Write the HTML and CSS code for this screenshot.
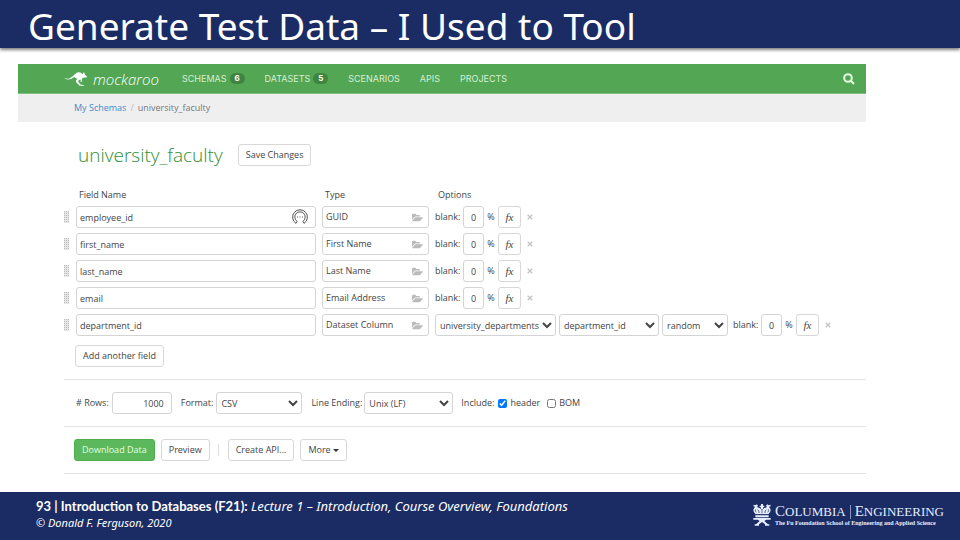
FILE: index.html
```html
<!DOCTYPE html>
<html lang="en">
<head>
<meta charset="utf-8">
<meta name="viewport" content="width=device-width, initial-scale=1">
<title>Generate Test Data – I Used to Tool</title>
<link rel="stylesheet" href="styles.css">
</head>
<body>
<svg class="defs" aria-hidden="true">
  <symbol id="folder" viewBox="0 0 18 14"><path d="M0 11V2.500Q0 1 1.500 1H5Q6.500 1 6.500 2.500V3H11.500Q13 3 13 4.500V5.500H6Q4.500 5.500 3.500 6.700Z"/><path d="M6 6.700H17Q18.300 6.700 17.500 7.700L14 12Q13.200 13 12 13H1Q0 13 .7 12L4.200 7.700Q5 6.700 6 6.700Z"/></symbol>
  <symbol id="grip" viewBox="0 0 6 12"><path d="M0 0H5V12H0Z" fill="#e6e6e6"/><path d="M.5 0V12M2.500 0V12M4.500 0V12" fill="none" stroke="currentColor" stroke-dasharray="1 1"/></symbol>
  <symbol id="cross" viewBox="0 0 6 6"><path d="M.7 .7L5.300 5.300M5.300 .7L.7 5.300" fill="none" stroke="currentColor" stroke-width="1.300"/></symbol>
</svg>

<header class="slide-header"><h1 class="slide-title">Generate Test Data – I Used to Tool</h1></header>

<main class="slide-main">
  <div class="app">
    <nav class="navbar">
      <a class="brand" href="#">
        <svg class="kangaroo" viewBox="0 0 66 42" aria-hidden="true"><path d="M0 18Q8 24 17 20Q25 16 31 9Q38 1 47 4L54 9L55 2L58 7L60 4L60 10L66 15L65 18L58 18Q54 19 51 22L52 29L48 32L47 28L49 26L46 24L40 28L47 38L57 40L57 42L45 42L35 32L34 27L39 22Q33 21 30 17Q22 23 13 24Q4 25 0 18Z"/></svg>
        <span class="brand-name">mockaroo</span>
      </a>
      <ul class="nav-links">
        <li><a href="#">SCHEMAS <span class="badge">6</span></a></li>
        <li><a href="#">DATASETS <span class="badge">5</span></a></li>
        <li><a href="#">SCENARIOS</a></li>
        <li><a href="#">APIS</a></li>
        <li><a href="#">PROJECTS</a></li>
      </ul>
      <button class="search" type="button" aria-label="Search"><svg viewBox="0 0 12 12"><circle cx="5" cy="5" r="3.800"/><path d="M7.800 7.800L11 11"/></svg></button>
    </nav>
    <nav class="breadcrumb"><a href="#">My Schemas</a><span class="slash">/</span><span>university_faculty</span></nav>

    <form class="schema">
      <div class="heading">
        <h2>university_faculty</h2>
        <button class="btn" type="button">Save Changes</button>
      </div>

      <div class="fields">
        <div class="row labels"><span></span><span>Field Name</span><span>Type</span><span>Options</span></div>
        <div class="row">
          <svg class="grip"><use href="#grip"/></svg>
          <div class="name-cell">
            <input class="control" type="text" value="employee_id" aria-label="Field name 1">
            <svg class="helper" viewBox="0 0 16 16" aria-hidden="true"><path d="M4 14.400A7.400 7.400 0 1 1 12 14.400M5 12.300A5.200 5.200 0 1 1 11 12.300M4 14.400L5 12.300M12 14.400L11 12.300"/><path d="M5 8H6M7.500 8H8.500M10 8H11"/></svg>
          </div>
          <button class="control type" type="button">GUID<svg><use href="#folder"/></svg></button>
          <div class="options"><label for="b1">blank:</label><input class="control blank" id="b1" type="text" value="0"><span class="percent">%</span><button class="btn fx" type="button">fx</button><button class="remove" type="button" aria-label="Remove"><svg><use href="#cross"/></svg></button></div>
        </div>
        <div class="row">
          <svg class="grip"><use href="#grip"/></svg>
          <div class="name-cell"><input class="control" type="text" value="first_name" aria-label="Field name 2"></div>
          <button class="control type" type="button">First Name<svg><use href="#folder"/></svg></button>
          <div class="options"><label for="b2">blank:</label><input class="control blank" id="b2" type="text" value="0"><span class="percent">%</span><button class="btn fx" type="button">fx</button><button class="remove" type="button" aria-label="Remove"><svg><use href="#cross"/></svg></button></div>
        </div>
        <div class="row">
          <svg class="grip"><use href="#grip"/></svg>
          <div class="name-cell"><input class="control" type="text" value="last_name" aria-label="Field name 3"></div>
          <button class="control type" type="button">Last Name<svg><use href="#folder"/></svg></button>
          <div class="options"><label for="b3">blank:</label><input class="control blank" id="b3" type="text" value="0"><span class="percent">%</span><button class="btn fx" type="button">fx</button><button class="remove" type="button" aria-label="Remove"><svg><use href="#cross"/></svg></button></div>
        </div>
        <div class="row">
          <svg class="grip"><use href="#grip"/></svg>
          <div class="name-cell"><input class="control" type="text" value="email" aria-label="Field name 4"></div>
          <button class="control type" type="button">Email Address<svg><use href="#folder"/></svg></button>
          <div class="options"><label for="b4">blank:</label><input class="control blank" id="b4" type="text" value="0"><span class="percent">%</span><button class="btn fx" type="button">fx</button><button class="remove" type="button" aria-label="Remove"><svg><use href="#cross"/></svg></button></div>
        </div>
        <div class="row">
          <svg class="grip"><use href="#grip"/></svg>
          <div class="name-cell"><input class="control" type="text" value="department_id" aria-label="Field name 5"></div>
          <button class="control type" type="button">Dataset Column<svg><use href="#folder"/></svg></button>
          <div class="options">
            <div class="selects">
              <select class="control dataset" aria-label="Dataset"><option>university_departments</option></select>
              <select class="control column" aria-label="Column"><option>department_id</option></select>
              <select class="control order" aria-label="Order"><option>random</option></select>
            </div>
            <label for="b5">blank:</label><input class="control blank" id="b5" type="text" value="0"><span class="percent">%</span><button class="btn fx" type="button">fx</button><button class="remove" type="button" aria-label="Remove"><svg><use href="#cross"/></svg></button>
          </div>
        </div>
        <button class="btn add" type="button">Add another field</button>
      </div>

      <div class="bar output">
        <label for="rows"># Rows:</label><input class="control rows" id="rows" type="text" value="1000">
        <label for="format">Format:</label><select class="control format" id="format"><option>CSV</option></select>
        <label for="ending">Line Ending:</label><select class="control ending" id="ending"><option>Unix (LF)</option></select>
        <span class="include">Include:</span>
        <input class="check" type="checkbox" id="header" checked><label for="header">header</label>
        <input class="check" type="checkbox" id="bom"><label for="bom">BOM</label>
      </div>

      <div class="bar actions">
        <button class="btn primary" type="button">Download Data</button>
        <button class="btn" type="button">Preview</button>
        <span class="divider"></span>
        <button class="btn" type="button">Create API...</button>
        <button class="btn" type="button">More <span class="caret"></span></button>
      </div>
    </form>
  </div>
</main>

<footer class="slide-footer">
  <div>
    <p class="course"><b>93 | Introduction to Databases (F21):</b> <i>Lecture 1 – Introduction, Course Overview, Foundations</i></p>
    <p class="author">© Donald F. Ferguson, 2020</p>
  </div>
  <div class="school">
    <svg class="crown" viewBox="0 0 54 66" aria-hidden="true"><path d="M8 31Q1 25 1 17Q3 9 13 10Q22 12 27 18Q32 12 41 10Q51 9 53 17Q53 25 46 31Z"/><path d="M24 0H30V5H34V10H30V15H24V10H20V5H24ZM2 2L7 4L11 1L15 5L12 9L14 13H4L6 8L1 7ZM39 5L43 1L47 4L52 2L53 7L48 8L50 13H40L42 9Z"/><path class="cut" d="M10 25Q5 21 8 16M18 27Q19 20 14 17M27 28V18M36 27Q35 20 40 17M44 25Q49 21 46 16M8 32H46"/><path d="M7 34H47V40H7ZM1 42H53V47H40L34 51L45 61H49V65H36V61L27 54L18 61V65H5V61H9L20 51L14 47H1Z"/></svg>
    <div class="school-text">
      <p class="school-name"><span><b>C</b>OLUMBIA</span><span class="rule"></span><span><b>E</b>NGINEERING</span></p>
      <p class="school-sub">The Fu Foundation School of Engineering and Applied Science</p>
    </div>
  </div>
</footer>
</body>
</html>
```

FILE: styles.css
```css
* { box-sizing: border-box; }
body {
  margin: 0;
  min-height: 100vh;
  display: flex;
  flex-direction: column;
  background: #fff;
  color: #444;
  font: 9px/12px "Open Sans", "Noto Sans", sans-serif;
}
h1, h2, p, ul { margin: 0; padding: 0; font-weight: 400; }
a { text-decoration: none; color: inherit; }
button, input, select { font: inherit; color: inherit; margin: 0; }
.defs { display: none; }

.slide-header {
  height: 48px;
  padding-left: 28px;
  background: #1b2c64;
  box-shadow: 0 2px 3px rgba(0, 0, 0, .5);
}
.slide-title { color: #fff; font: 37px/52px "Noto Sans", "Open Sans", sans-serif; white-space: nowrap; }
.slide-main { flex: 1; padding: 16px 94px 16px 18px; }

.navbar {
  display: flex;
  align-items: center;
  height: 30px;
  padding: 0 11px 0 46px;
  background: #53a653;
  border-bottom: 1px solid #7fc07f;
}
.brand { display: flex; align-items: center; width: 118px; color: #fff; gap: 6px; }
.kangaroo { width: 23px; height: 15px; fill: #fff; }
.brand-name { font: italic 300 15px/22px "Open Sans", sans-serif; }
.nav-links { display: flex; gap: 20px; list-style: none; color: #d5efd5; font: 9px/12px Inter, sans-serif; }
.nav-links a { display: flex; align-items: center; gap: 3px; }
.badge {
  width: 15px;
  border-radius: 6px;
  background: #3f853f;
  color: #fff;
  font: 700 8px/11px Inter, sans-serif;
  text-align: center;
}
.search { margin-left: auto; padding: 0; border: 0; background: none; height: 12px; }
.search svg { display: block; width: 12px; height: 12px; fill: none; stroke: #e4ffe0; stroke-width: 2; }

.breadcrumb { display: flex; gap: 4px; padding: 8px 56px; background: #efefef; color: #777; }
.breadcrumb a { color: #428bca; }
.slash { color: #bbb; }

.schema { padding-left: 46px; }
.heading { display: flex; align-items: center; gap: 15px; padding: 20px 0 0 14px; }
.heading h2 { color: #2f8f36; font: 300 19px/26px "Open Sans", sans-serif; }
.btn {
  height: 22px;
  padding: 0 7px;
  border: 1px solid #d8d8d8;
  border-radius: 3px;
  background: #fff;
  white-space: nowrap;
}
.control {
  height: 22px;
  padding: 0 3px;
  border: 1px solid #d4d4d4;
  border-radius: 3px;
  background: #fff;
}
select.control { padding: 0; }

.fields { display: flex; flex-direction: column; gap: 5px; padding: 20px 0 12px; }
.row { display: grid; grid-template-columns: 6px 240px 107px 1fr; column-gap: 6px; align-items: center; }
.labels { line-height: 13px; }
.labels span { padding-left: 3px; }
.grip { width: 6px; height: 12px; color: #bbb; }
.name-cell { display: flex; position: relative; }
.name-cell .control { width: 100%; }
.helper { position: absolute; right: 8px; top: 3px; width: 16px; height: 16px; fill: none; stroke: #555; stroke-width: 1; }
.type { display: flex; align-items: center; justify-content: space-between; text-align: left; }
.type svg { width: 11px; height: 9px; margin-right: 2px; fill: #bbb; }
.options { display: flex; align-items: center; }
.selects { display: flex; gap: 3px; margin-right: 5px; }
.dataset { width: 121px; }
.column { width: 100px; }
.order { width: 66px; }
.options label { width: 28px; white-space: nowrap; }
.blank { width: 21px; text-align: center; }
.percent { width: 14px; text-align: center; }
.fx { width: 23px; padding: 0; font: italic 11px/16px "Liberation Serif", serif; }
.remove { margin-left: 6px; padding: 0; border: 0; background: none; }
.remove svg { display: block; width: 6px; height: 6px; color: #c4c4c4; }
.add { align-self: flex-start; margin: 4px 0 0 11px; }

.bar { display: flex; align-items: center; border-top: 1px solid #e3e3e3; }
.output { padding: 12px 0 12px 12px; }
.output label { white-space: nowrap; }
.rows { width: 60px; margin: 0 9px 0 3px; padding-right: 7px; text-align: right; }
.format { width: 86px; margin: 0 9px 0 3px; }
.ending { width: 89px; margin: 0 8px 0 2px; }
.check { width: 9px; height: 9px; margin: 0 3px 0 4px; }
label + .check { margin-left: 7px; }
.actions { gap: 6px; padding: 12px 0 12px 10px; border-bottom: 1px solid #e3e3e3; }
.primary { border-color: #4cae4c; background: #5cb85c; color: #e4ffe0; }
.divider { width: 1px; height: 12px; margin: 0 3px 0 2px; background: #ddd; }
.caret { display: inline-block; margin-bottom: 1px; border: 3px solid transparent; border-top-color: #333; border-bottom: 0; }

.slide-footer {
  display: flex;
  justify-content: space-between;
  align-items: flex-start;
  height: 48px;
  padding: 5px 16px 0 36px;
  background: #1b2c64;
  color: #fff;
}
.course { font: 13px/18px "Noto Sans", sans-serif; }
.course b { font-family: Lato, sans-serif; }
.author { font: italic 11px/15px "Noto Sans", sans-serif; }
.school { display: flex; gap: 4px; padding-top: 7px; color: #e6eeff; }
.crown { width: 18px; height: 22px; fill: #e6eeff; }
.cut { fill: none; stroke: #1b2c64; stroke-width: 2; }
.school-name { display: flex; align-items: center; font: 13px/15px "Liberation Serif", serif; gap: 4px; }
.school-name b { font-size: 15px; font-weight: 400; }
.rule { width: 1px; height: 14px; background: #8797c2; }
.school-sub { font: 700 6px/8px "Liberation Serif", serif; white-space: nowrap; }
```
